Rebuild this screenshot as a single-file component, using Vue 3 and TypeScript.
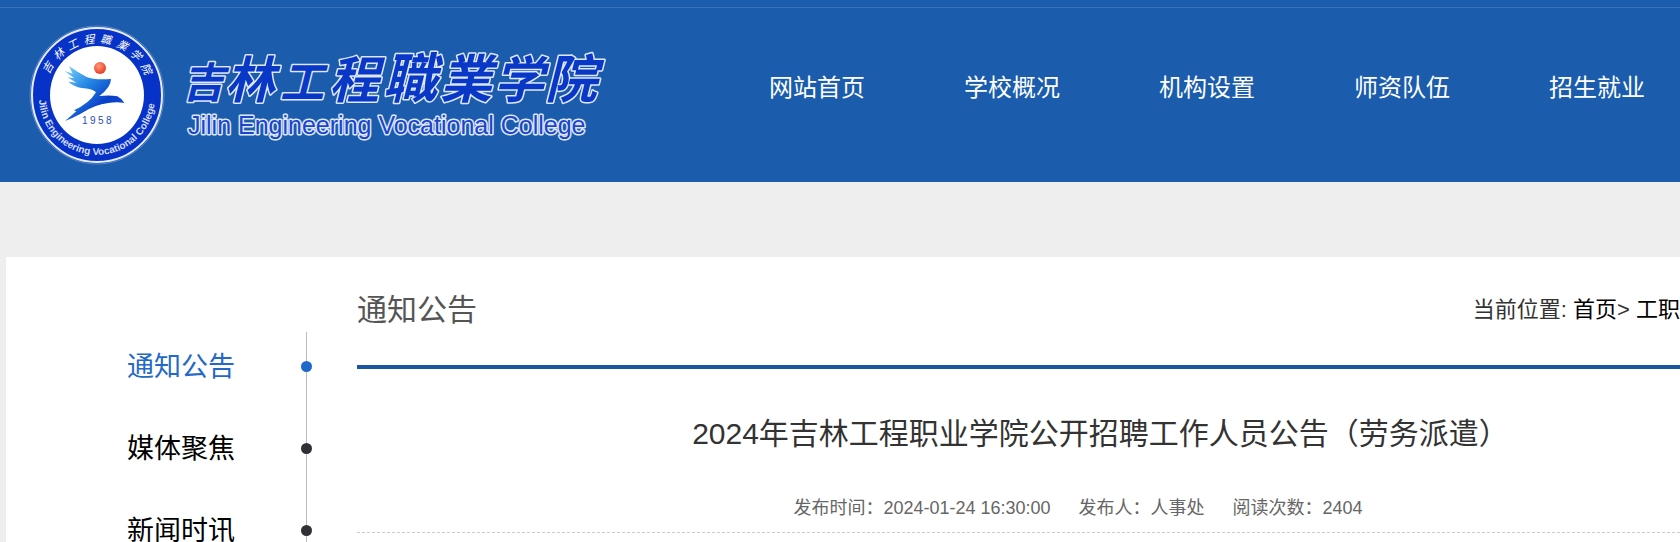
<script setup lang="ts">
interface SideItem {
  label: string
  active?: boolean
}

interface ScriptChar {
  char: string
  x: number
  size: number
}

const navItems: string[] = ['网站首页', '学校概况', '机构设置', '师资队伍', '招生就业']

const sideItems: SideItem[] = [
  { label: '通知公告', active: true },
  { label: '媒体聚焦' },
  { label: '新闻时讯' },
]

const metaItems: string[] = [
  '发布时间：2024-01-24 16:30:00',
  '发布人：人事处',
  '阅读次数：2404',
]

const ringChars = Array.from('吉林工程職業学院').map((char, i) => ({
  char,
  angle: Math.round(-61 + i * 17.5),
}))

const scriptChars: ScriptChar[] = [
  { char: '吉', x: 182, size: 42 },
  { char: '林', x: 225, size: 50 },
  { char: '工', x: 280, size: 44 },
  { char: '程', x: 329, size: 50 },
  { char: '職', x: 383, size: 54 },
  { char: '業', x: 440, size: 52 },
  { char: '学', x: 494, size: 50 },
  { char: '院', x: 545, size: 52 },
]
</script>

<template>
  <div class="page">
    <header class="header">
      <div class="topline"></div>
      <div class="bar">
        <a class="brand" href="#" aria-label="吉林工程职业学院">
          <svg class="logo" width="582" height="142" viewBox="28 24 582 142">
            <defs>
              <linearGradient id="bird" x1="0" y1="0" x2="1" y2="1">
                <stop offset="0" stop-color="#7fd4fb" />
                <stop offset="0.35" stop-color="#2488e4" />
                <stop offset="0.65" stop-color="#0a40c8" />
                <stop offset="1" stop-color="#0a4fd6" />
              </linearGradient>
              <radialGradient id="sun" cx="0.4" cy="0.35" r="0.7">
                <stop offset="0" stop-color="#ff9a78" />
                <stop offset="1" stop-color="#e8341c" />
              </radialGradient>
              <path id="ring-text" d="M39 97 A58 58 0 0 0 155 97" />
            </defs>
            <ellipse cx="97" cy="95" rx="67" ry="69" fill="none" stroke="#5a83cc" />
            <ellipse cx="97" cy="95" rx="65" ry="67" fill="#0632c8" stroke="#e8edfb" stroke-width="2" />
            <ellipse cx="97" cy="95" rx="47" ry="49" fill="#fff" />
            <text
              v-for="item in ringChars"
              :key="item.angle"
              class="ring-char"
              x="97"
              y="43"
              :transform="`rotate(${item.angle} 97 95)`"
            >{{ item.char }}</text>
            <text class="ring-en"><textPath href="#ring-text" startOffset="3">Jilin Engineering Vocational College</textPath></text>
            <circle cx="100" cy="68" r="6" fill="url(#sun)" />
            <path
              transform="scale(0.3333)"
              fill="url(#bird)"
              d="M194 213 L218 221 L207 198 Q235 218 260 231 Q285 241 333 237 Q333 262 298 288 Q330 284 352 289 Q365 295 373 309 Q352 305 325 309 Q285 313 242 341 Q220 353 195 363 L229 334 L222 331 Q268 310 288 277 Q276 265 245 264 Q222 260 205 245 L229 248 L203 232 L223 235 Z"
            />
            <text class="year" x="82 90 98 106" y="124">1958</text>
            <text class="script" y="98">
              <tspan v-for="item in scriptChars" :key="item.char" :x="item.x" :font-size="item.size">{{ item.char }}</tspan>
            </text>
            <text class="english" x="188" y="134">Jilin Engineering Vocational College</text>
          </svg>
        </a>
        <nav class="nav">
          <a v-for="item in navItems" :key="item" href="#">{{ item }}</a>
        </nav>
      </div>
    </header>

    <main class="panel">
      <aside class="side">
        <ul class="side-list">
          <li v-for="item in sideItems" :key="item.label" :class="{ active: item.active }">
            <a href="#">{{ item.label }}</a>
            <span class="dot"></span>
          </li>
        </ul>
      </aside>
      <section class="content">
        <div class="section-head">
          <h2>通知公告</h2>
          <div class="crumbs">当前位置: <a href="#">首页</a>&gt; <a href="#">工职</a></div>
        </div>
        <h1>2024年吉林工程职业学院公开招聘工作人员公告（劳务派遣）</h1>
        <div class="meta">
          <span v-for="item in metaItems" :key="item">{{ item }}</span>
        </div>
      </section>
    </main>
  </div>
</template>

<style>
body {
  margin: 0;
  background: #eee;
}
</style>

<style scoped>
.page {
  display: flex;
  flex-direction: column;
  min-height: 100vh;
  overflow: hidden;
  background: #eee;
  color: #333;
  font-family: "Liberation Sans", "Noto Sans CJK SC", sans-serif;
}

a {
  color: inherit;
  text-decoration: none;
}

.header {
  background: #1b5cac;
}

.topline {
  height: 7px;
  border-bottom: 1px solid #3a72b9;
}

.bar {
  display: flex;
  align-items: flex-start;
  justify-content: space-between;
  height: 158px;
  padding: 16px 35px 0 28px;
}

.brand,
.logo {
  display: block;
}

.nav {
  display: flex;
  gap: 99px;
  padding-top: 44px;
  color: #fff;
  font-size: 24px;
  line-height: 40px;
  white-space: nowrap;
}

.ring-char {
  fill: #fff;
  font-size: 11px;
  font-style: italic;
  text-anchor: middle;
}

.ring-en {
  fill: #d4dcf8;
  font-size: 10px;
  font-weight: 700;
}

.year {
  fill: #2a4fc0;
  font-size: 10px;
}

.script {
  fill: #0a38c6;
  stroke: #dfe8fa;
  stroke-width: 3px;
  stroke-linejoin: round;
  paint-order: stroke;
  font-weight: 700;
  font-style: italic;
}

.english {
  fill: #1a45cc;
  stroke: #dfe8fa;
  stroke-width: 3px;
  stroke-linejoin: round;
  paint-order: stroke;
  font-size: 25px;
}

.panel {
  display: flex;
  flex: 1;
  margin: 75px 0 0 6px;
  background: #fff;
}

.side {
  flex: 0 0 351px;
  padding-top: 75px;
  box-sizing: border-box;
}

.side-list {
  display: flex;
  flex-direction: column;
  gap: 13px;
  width: 300px;
  margin: 0;
  padding: 0;
  border-right: 1px solid #bbb;
  list-style: none;
}

.side-list li {
  display: flex;
  align-items: center;
  justify-content: space-between;
  height: 69px;
  margin-right: -6px;
  padding-left: 121px;
  color: #000;
  font-size: 27px;
}

.side-list a {
  padding-bottom: 4px;
}

.dot {
  width: 11px;
  height: 11px;
  border-radius: 50%;
  background: #303135;
}

.side-list .active {
  color: #2468c8;
}

.active .dot {
  background: #1e68cb;
}

.content {
  flex: 1;
  min-width: 0;
}

.section-head {
  display: flex;
  align-items: center;
  justify-content: space-between;
  height: 100px;
  padding-bottom: 8px;
  border-bottom: 4px solid #1a569f;
}

h2 {
  margin: 0;
  color: #555;
  font-size: 30px;
  font-weight: 400;
}

.crumbs {
  flex: 0 0 207px;
  font-size: 22px;
  white-space: nowrap;
}

.crumbs a {
  color: #000;
}

h1 {
  margin: 40px 0 0;
  padding-left: 164px;
  text-align: center;
  font-size: 30px;
  font-weight: 400;
  line-height: 50px;
  white-space: nowrap;
}

.meta {
  display: flex;
  justify-content: center;
  gap: 28px;
  margin-top: 34px;
  padding: 0 0 9px 119px;
  border-bottom: 1px dashed #ccc;
  color: #666;
  font-size: 18px;
  line-height: 30px;
  white-space: nowrap;
}
</style>
